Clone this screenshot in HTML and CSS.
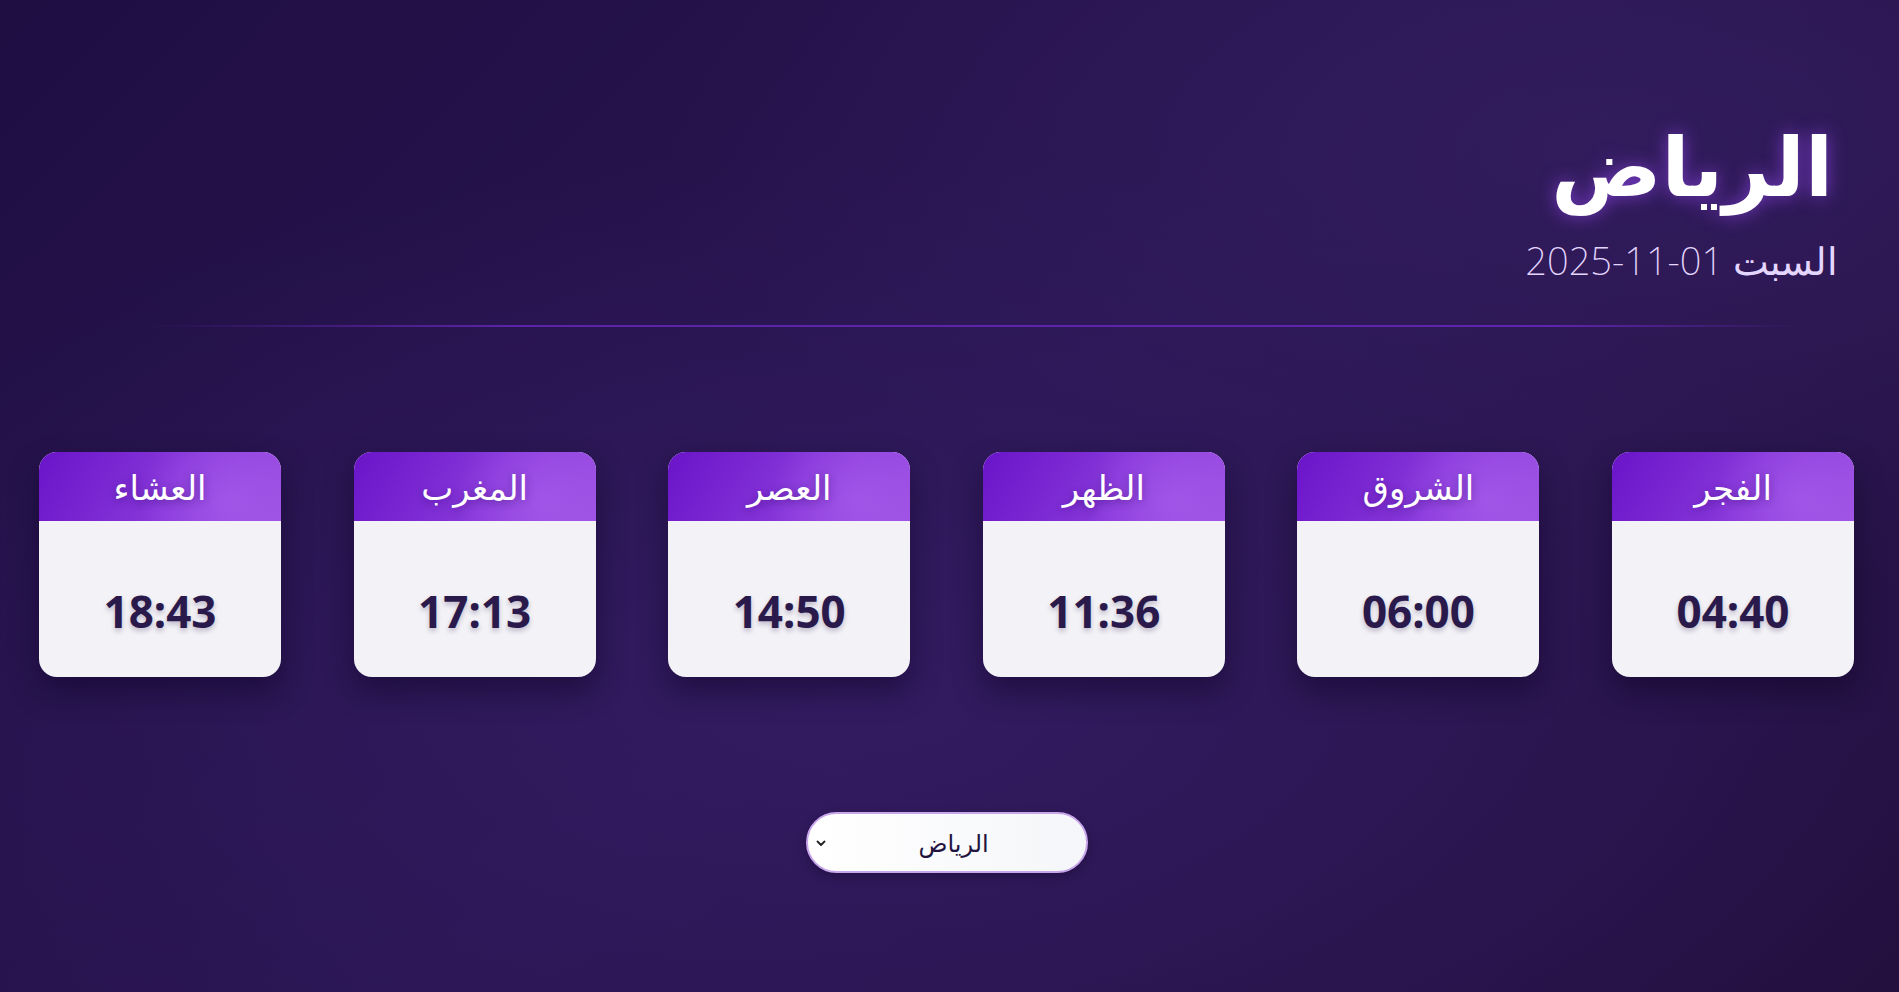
FILE: index.html
```html
<!DOCTYPE html>
<html lang="ar" dir="rtl">
<head>
<meta charset="utf-8">
<title>أوقات الصلاة</title>
<link rel="stylesheet" href="styles.css">
</head>
<body>
<main class="page">
  <header class="head">
    <h1 class="city">الرياض</h1>
    <p class="date">السبت <span class="num">2025-11-01</span></p>
  </header>
  <div class="divider"></div>
  <section class="cards">
    <div class="card"><div class="card-title">الفجر</div><div class="card-time">04:40</div></div>
    <div class="card"><div class="card-title">الشروق</div><div class="card-time">06:00</div></div>
    <div class="card"><div class="card-title">الظهر</div><div class="card-time">11:36</div></div>
    <div class="card"><div class="card-title">العصر</div><div class="card-time">14:50</div></div>
    <div class="card"><div class="card-title">المغرب</div><div class="card-time">17:13</div></div>
    <div class="card"><div class="card-title">العشاء</div><div class="card-time">18:43</div></div>
  </section>
  <div class="picker">
    <div class="select">
      <span class="select-text">الرياض</span>
      <svg class="chev" width="10" height="7" viewBox="0 0 10 7"><path d="M1.5 1.5 L5 5 L8.5 1.5" fill="none" stroke="#222" stroke-width="1.8" stroke-linecap="round" stroke-linejoin="round"/></svg>
    </div>
  </div>
</main>
</body>
</html>
```
FILE: styles.css
```css
* { box-sizing: border-box; }
html, body { margin: 0; padding: 0; height: 100%; }
body {
  font-family: "Noto Sans", "DejaVu Sans", sans-serif;
  background:
    radial-gradient(ellipse 60% 55% at 45% 70%, rgba(52,28,98,0.9) 0%, rgba(52,28,98,0) 100%),
    radial-gradient(ellipse 50% 45% at 85% 15%, rgba(52,30,96,0.8) 0%, rgba(52,30,96,0) 100%),
    linear-gradient(135deg, #1f0e42 0%, #2a1552 50%, #24103f 100%);
  color: #fff;
  overflow: hidden;
}
.page {
  height: 992px;
  display: flex;
  flex-direction: column;
}
.head {
  padding: 114px 66px 0 0;
  text-align: right;
}
.city {
  margin: 0;
  font-size: 82px;
  font-weight: 700;
  line-height: 100px;
  color: #fff;
  text-shadow: 0 0 18px rgba(140, 70, 230, 0.75);
}
.date {
  margin: 20px -5px 0 0;
  font-size: 38px;
  font-weight: 200;
  line-height: 52px;
  color: #e4d6ff;
}
.num {
  direction: ltr;
  unicode-bidi: isolate;
}
.divider {
  margin: 39px 100px 0 145px;
  height: 2px;
  background: linear-gradient(90deg, rgba(90,40,160,0) 0%, #5b24a8 22%, #5e25ad 85%, rgba(90,40,160,0) 100%);
}
.cards {
  margin-top: 125px;
  display: flex;
  justify-content: space-between;
  padding: 0 45px 0 39px;
}
.card {
  width: 242px;
  height: 225px;
  border-radius: 18px;
  overflow: hidden;
  background: #f3f2f6;
  box-shadow: 0 14px 30px rgba(10, 0, 30, 0.45);
  display: flex;
  flex-direction: column;
}
.card-title {
  height: 69px;
  display: flex;
  align-items: center;
  justify-content: center;
  font-size: 34px;
  font-weight: 500;
  color: #fff;
  text-shadow: 0 2px 8px rgba(40, 0, 90, 0.45);
  background:
    radial-gradient(circle at 78% 70%, rgba(175,100,240,0.55) 0%, rgba(175,100,240,0) 45%),
    linear-gradient(120deg, #6a14c9 0%, #8a3adb 60%, #9c50e2 100%);
}
.card-time {
  flex: 1;
  display: flex;
  align-items: center;
  justify-content: center;
  padding-top: 24px;
  font-size: 44px;
  font-weight: 700;
  color: #2a1a4c;
  direction: ltr;
  text-shadow: 0 3px 5px rgba(40, 20, 80, 0.25);
}
.picker {
  margin-top: 135px;
  display: flex;
  justify-content: center;
  padding-right: 6px;
}
.select {
  width: 282px;
  height: 61px;
  border-radius: 31px;
  border: 2px solid #c8a6ea;
  background: linear-gradient(90deg, #ffffff, #f5f6f9);
  display: flex;
  align-items: center;
  justify-content: center;
  position: relative;
  box-shadow: 0 4px 10px rgba(10, 0, 30, 0.3);
}
.select-text {
  font-size: 24px;
  color: #22143e;
  padding-left: 14px;
}
.chev {
  position: absolute;
  left: 8px;
  top: 26px;
}
```
